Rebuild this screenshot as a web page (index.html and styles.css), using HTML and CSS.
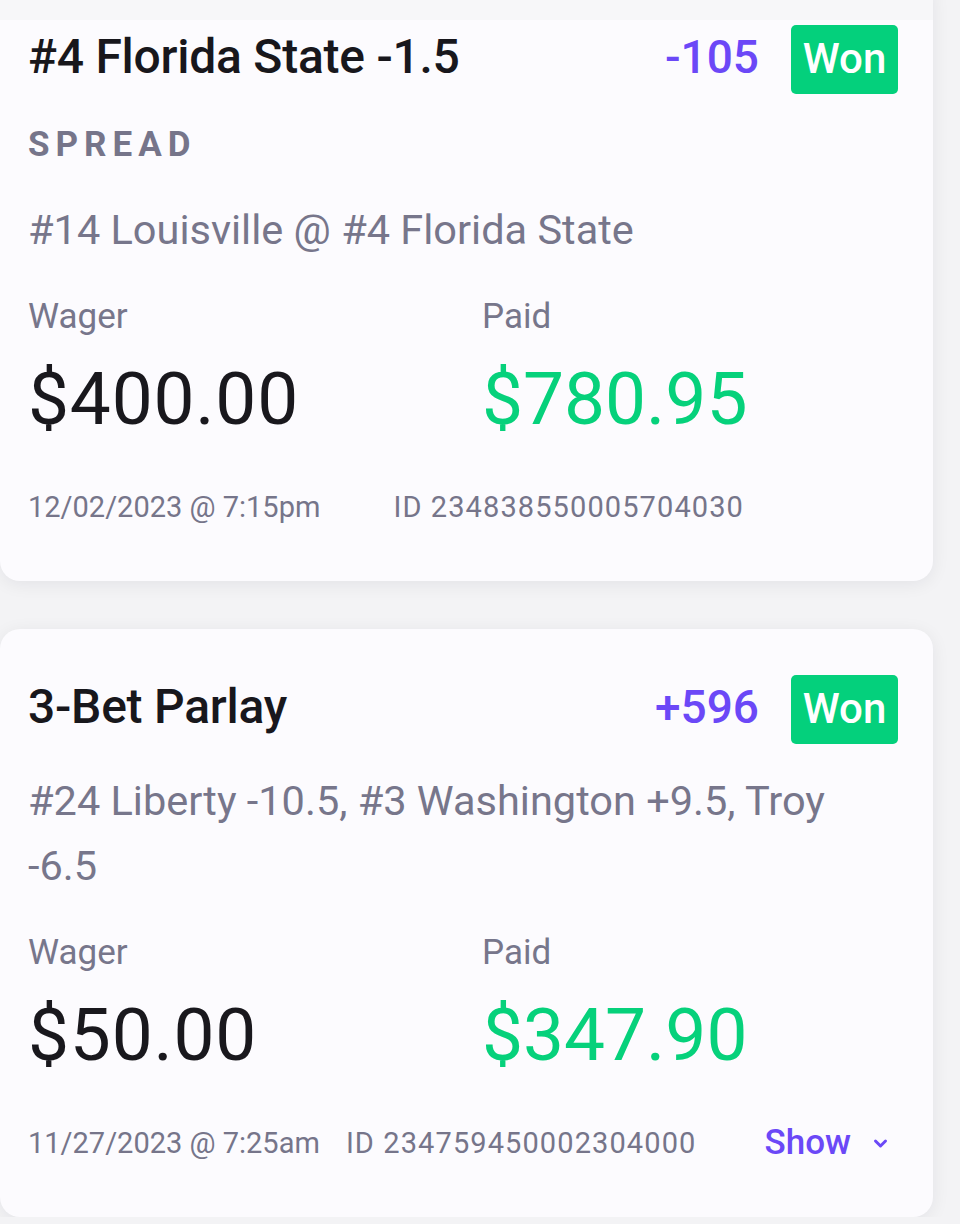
FILE: index.html
```html
<!DOCTYPE html>
<html lang="en">
<head>
<meta charset="utf-8">
<title>My Bets</title>
<link rel="stylesheet" href="styles.css">
</head>
<body>
<div class="topbar"></div>
<main class="feed">
  <article class="bet bet--first">
    <header class="bet-head">
      <h2 class="bet-title">#4 Florida State -1.5</h2>
      <span class="odds">-105</span>
      <span class="badge">Won</span>
    </header>
    <div class="market">SPREAD</div>
    <p class="desc">#14 Louisville @ #4 Florida State</p>
    <div class="money">
      <div class="money-col">
        <div class="money-label">Wager</div>
        <div class="money-value">$400.00</div>
      </div>
      <div class="money-col">
        <div class="money-label">Paid</div>
        <div class="money-value money-value--won">$780.95</div>
      </div>
    </div>
    <footer class="bet-foot bet-foot--wide">
      <span>12/02/2023 @ 7:15pm</span>
      <span class="bet-id">ID 234838550005704030</span>
    </footer>
  </article>

  <article class="bet">
    <header class="bet-head">
      <h2 class="bet-title">3-Bet Parlay</h2>
      <span class="odds">+596</span>
      <span class="badge">Won</span>
    </header>
    <p class="desc desc--parlay">#24 Liberty -10.5, #3 Washington +9.5, Troy -6.5</p>
    <div class="money">
      <div class="money-col">
        <div class="money-label">Wager</div>
        <div class="money-value">$50.00</div>
      </div>
      <div class="money-col">
        <div class="money-label">Paid</div>
        <div class="money-value money-value--won">$347.90</div>
      </div>
    </div>
    <footer class="bet-foot">
      <span>11/27/2023 @ 7:25am</span>
      <span class="bet-id">ID 234759450002304000</span>
      <button class="show" type="button">Show
        <svg class="chev" width="17" height="11" viewBox="0 0 17 11" aria-hidden="true"><path d="M3.5 3 L8.5 8 L13.5 3" fill="none" stroke="currentColor" stroke-width="3" stroke-linecap="round" stroke-linejoin="round"/></svg>
      </button>
    </footer>
  </article>
</main>
</body>
</html>
```
FILE: styles.css
```css
* { box-sizing: border-box; }

html, body {
  margin: 0;
  padding: 0;
}

body {
  background: #f3f3f5;
  font-family: Roboto, "Noto Sans", Arial, sans-serif;
  color: #19181d;
  overflow: hidden;
}

.topbar {
  position: fixed;
  top: 0;
  left: 0;
  width: 933px;
  height: 20px;
  background: #f7f7f9;
  z-index: 5;
}

.feed {
  width: 933px;
  margin-top: -21px;
  display: flex;
  flex-direction: column;
  gap: 48px;
}

.bet {
  background: #fcfbfe;
  border-radius: 20px;
  box-shadow: 0 3px 18px rgba(20, 20, 40, 0.07);
  padding: 46px 35px 54px 28px;
}

.bet-head {
  display: flex;
  align-items: center;
  height: 69px;
}

.bet-title {
  margin: 0;
  flex: 1;
  font-size: 48px;
  font-weight: 500;
  letter-spacing: -0.25px;
  line-height: 56px;
  padding-bottom: 6px;
  color: #18171c;
}

.odds {
  font-size: 46px;
  font-weight: 500;
  line-height: 54px;
  padding-bottom: 6px;
  color: #6b48f7;
  margin-right: 32px;
}

.badge {
  height: 69px;
  width: 107px;
  border-radius: 5px;
  background: #04d07c;
  color: #ffffff;
  font-size: 42px;
  font-weight: 500;
  display: flex;
  align-items: center;
  justify-content: center;
  padding-bottom: 3px;
}

.market {
  margin-top: 30px;
  font-size: 35px;
  font-weight: 700;
  letter-spacing: 6px;
  line-height: 41px;
  color: #76758a;
}

.desc {
  margin: 32px 0 0;
  font-size: 41.5px;
  line-height: 65px;
  color: #77768b;
}

.desc--parlay {
  margin-top: 24px;
  padding-right: 40px;
}

.money {
  margin-top: 34px;
  display: grid;
  grid-template-columns: 454px 1fr;
}

.money-label {
  font-size: 35px;
  line-height: 41px;
  color: #77768b;
}

.money-value {
  margin-top: 20px;
  font-size: 73px;
  letter-spacing: 0.8px;
  line-height: 85px;
  color: #19181d;
}

.money-value--won {
  color: #06d17b;
  letter-spacing: 0;
}

.bet-foot {
  margin-top: 44px;
  display: flex;
  align-items: center;
  gap: 26px;
  min-height: 41px;
  font-size: 29px;
  color: #76758a;
}

.bet-id {
  letter-spacing: 1.1px;
}

.bet-foot--wide {
  gap: 73px;
}

.show {
  margin-left: auto;
  display: flex;
  align-items: center;
  gap: 21px;
  border: 0;
  background: none;
  padding: 0 9px 0 0;
  font-family: inherit;
  font-size: 35px;
  font-weight: 500;
  line-height: 41px;
  color: #6b48f7;
  cursor: pointer;
}

.chev {
  display: block;
  margin-top: 2px;
}
```
